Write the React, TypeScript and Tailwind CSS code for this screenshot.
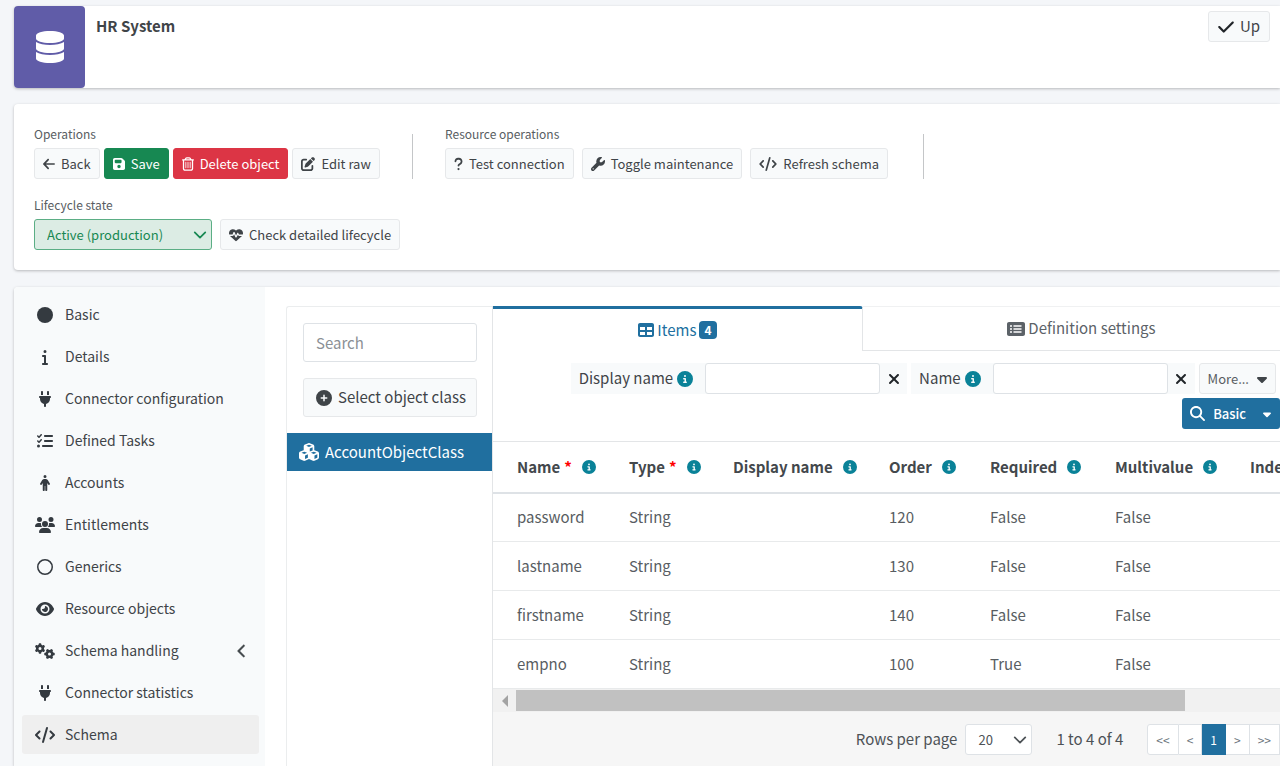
import type { ButtonHTMLAttributes, ReactNode } from "react";
import type { IconType } from "react-icons";
import { FaDatabase } from "react-icons/fa";
import {
  FaArrowLeft,
  FaCaretDown,
  FaCheck,
  FaChevronLeft,
  FaCircle,
  FaCircleInfo,
  FaCirclePlus,
  FaCode,
  FaCubes,
  FaEye,
  FaFloppyDisk,
  FaGears,
  FaHeartPulse,
  FaInfo,
  FaListCheck,
  FaMagnifyingGlass,
  FaPenToSquare,
  FaPerson,
  FaPlug,
  FaQuestion,
  FaRectangleList,
  FaRegCircle,
  FaRegTrashCan,
  FaTable,
  FaUsers,
  FaWrench,
  FaXmark,
} from "react-icons/fa6";

const menu: { label: string; icon: IconType; expandable?: boolean; active?: boolean }[] = [
  { label: "Basic", icon: FaCircle },
  { label: "Details", icon: FaInfo },
  { label: "Connector configuration", icon: FaPlug },
  { label: "Defined Tasks", icon: FaListCheck },
  { label: "Accounts", icon: FaPerson },
  { label: "Entitlements", icon: FaUsers },
  { label: "Generics", icon: FaRegCircle },
  { label: "Resource objects", icon: FaEye },
  { label: "Schema handling", icon: FaGears, expandable: true },
  { label: "Connector statistics", icon: FaPlug },
  { label: "Schema", icon: FaCode, active: true },
];

const columns = [
  { label: "Name", required: true, width: "w-[112px]" },
  { label: "Type", required: true, width: "w-[104px]" },
  { label: "Display name", width: "w-[156px]" },
  { label: "Order", width: "w-[101px]" },
  { label: "Required", width: "w-[125px]" },
  { label: "Multivalue", width: "w-[135px]" },
  { label: "Indexed", width: "w-[140px]" },
];

const rows = [
  ["password", "String", "", "120", "False", "False", ""],
  ["lastname", "String", "", "130", "False", "False", ""],
  ["firstname", "String", "", "140", "False", "False", ""],
  ["empno", "String", "", "100", "True", "False", ""],
];

type ToolButtonProps = {
  icon: IconType;
  iconWidth?: string;
  tone?: "light" | "green" | "red";
  children: ReactNode;
} & ButtonHTMLAttributes<HTMLButtonElement>;

function ToolButton({ icon: Icon, iconWidth = "w-[14px]", tone = "light", children, ...rest }: ToolButtonProps) {
  const tones = {
    light: "border-[#e6e8ea] bg-[#f8fafb] text-[#3f4448]",
    green: "border-[#178852] bg-[#178852] text-white",
    red: "border-[#dc3545] bg-[#dc3545] text-white",
  };
  return (
    <button
      type="button"
      className={`flex h-[31px] items-center gap-[6px] whitespace-nowrap rounded-[3px] border px-2 text-[13px] ${tones[tone]}`}
      {...rest}
    >
      <Icon className={`h-[14px] shrink-0 ${iconWidth}`} />
      {children}
    </button>
  );
}

function Filter({ label, id }: { label: string; id: string }) {
  return (
    <div className="flex h-[31px] items-stretch bg-[#f8fafb]">
      <label htmlFor={id} className="flex items-center gap-1 whitespace-nowrap pl-2 pr-3">
        {label}
        <FaCircleInfo className="size-4 text-[#0a8298]" />
      </label>
      <input
        id={id}
        type="text"
        className="w-[175px] rounded-[3px] border border-[#dee2e6] bg-white px-2 outline-none"
      />
      <button type="button" aria-label={`Remove ${label}`} className="flex w-[27px] items-center justify-center text-[#212529]">
        <FaXmark className="size-4" />
      </button>
    </div>
  );
}

function Chevron({ className }: { className?: string }) {
  return (
    <svg viewBox="0 0 16 16" fill="none" stroke="currentColor" strokeWidth="2" strokeLinecap="round" strokeLinejoin="round" className={className}>
      <path d="m2 5 6 6 6-6" />
    </svg>
  );
}

function Toolbar() {
  return (
    <section className="ml-[14px] mt-4 rounded-l-[4px] bg-white pb-5 pl-5 pt-[22px] shadow-[0_1px_3px_rgba(0,0,0,0.25)]">
      <div className="flex">
        <div className="w-[359px]">
          <h2 className="mb-[6px] text-[12px] leading-4 text-[#585d62]">Operations</h2>
          <div className="flex gap-1">
            <ToolButton icon={FaArrowLeft} iconWidth="w-3">Back</ToolButton>
            <ToolButton icon={FaFloppyDisk} iconWidth="w-3" tone="green">Save</ToolButton>
            <ToolButton icon={FaRegTrashCan} iconWidth="w-3" tone="red">Delete object</ToolButton>
            <ToolButton icon={FaPenToSquare}>Edit raw</ToolButton>
          </div>
        </div>
        <div className="mr-8 mt-2 w-5 border-r border-[#c4c6c8]" />
        <div className="w-[459px]">
          <h2 className="mb-[6px] text-[12px] leading-4 text-[#585d62]">Resource operations</h2>
          <div className="flex gap-2">
            <ToolButton icon={FaQuestion} iconWidth="w-[9px]">Test connection</ToolButton>
            <ToolButton icon={FaWrench}>Toggle maintenance</ToolButton>
            <ToolButton icon={FaCode} iconWidth="w-[18px]">Refresh schema</ToolButton>
          </div>
        </div>
        <div className="mt-2 w-5 border-r border-[#c4c6c8]" />
      </div>
      <label htmlFor="lifecycle" className="mb-[6px] mt-[18px] block text-[12px] leading-4 text-[#585d62]">
        Lifecycle state
      </label>
      <div className="flex gap-2">
        <div className="relative">
          <select
            id="lifecycle"
            className="h-[31px] w-[178px] appearance-none rounded-[3px] border border-[#5bae85] bg-[#dcece4] pl-3 text-[13px] text-[#178852]"
          >
            <option>Active (production)</option>
          </select>
          <Chevron className="pointer-events-none absolute right-[5px] top-[9px] size-[14px] text-[#178852]" />
        </div>
        <ToolButton icon={FaHeartPulse}>Check detailed lifecycle</ToolButton>
      </div>
    </section>
  );
}

function SideMenu() {
  return (
    <nav className="w-[251px] shrink-0 rounded-tl-[4px] bg-[#f8fafb] pl-2 pr-[6px] pt-2">
      <ul className="flex flex-col gap-[3px]">
        {menu.map(({ label, icon: Icon, expandable, active }) => (
          <li key={label}>
            <a
              href="#"
              className={`flex h-[39px] items-center gap-[9px] rounded-[3px] px-3 text-[14px] text-[#3f4448] ${active ? "bg-[#efefef]" : ""}`}
            >
              <span className="flex w-[22px] justify-center text-[#343a40]">
                <Icon className="h-4 w-5 shrink-0" />
              </span>
              {label}
              {expandable && <FaChevronLeft className="ml-auto h-[14px] w-[10px] stroke-current" strokeWidth={16} />}
            </a>
          </li>
        ))}
      </ul>
    </nav>
  );
}

function ObjectClasses() {
  return (
    <div className="w-[206px] shrink-0 rounded-tl-[3px] border-l border-t border-[#ebedee]">
      <div className="flex flex-col gap-4 p-4 pr-[15px]">
        <input
          type="search"
          aria-label="Search"
          placeholder="Search"
          className="h-[39px] w-full rounded-[3px] border border-[#dee2e6] px-3 text-[15px] outline-none placeholder:text-[#8b9095]"
        />
        <button
          type="button"
          className="flex h-[39px] items-center gap-[6px] whitespace-nowrap rounded-[3px] border border-[#e6e8ea] bg-[#f8fafb] px-3 text-[15px] text-[#3f4448]"
        >
          <FaCirclePlus className="size-4 shrink-0" />
          Select object class
        </button>
      </div>
      <a href="#" className="flex h-[38px] items-center gap-[6px] bg-[#206f9f] px-3 text-[15px] text-white">
        <FaCubes className="h-[18px] w-5 shrink-0" />
        AccountObjectClass
      </a>
    </div>
  );
}

function Pagination() {
  const pages = ["<<", "<", "1", ">", ">>"];
  return (
    <div className="flex h-[31px] text-[12px]">
      {pages.map((page) => (
        <button
          key={page}
          type="button"
          className={`border-y border-r px-2 first:rounded-l-[3px] first:border-l ${
            page === "1" ? "border-[#206f9f] bg-[#206f9f] text-white" : "border-[#dee2e6] bg-white text-[#6c757d]"
          }`}
        >
          {page}
        </button>
      ))}
    </div>
  );
}

function ItemsPanel() {
  return (
    <div className="flex min-w-0 flex-1 flex-col border-l border-[#e3e5e7]">
      <div role="tablist" className="flex h-[45px] text-[15px]">
        <button
          role="tab"
          aria-selected="true"
          type="button"
          className="flex w-[47%] items-center justify-center gap-[3px] rounded-tr-[3px] border-r border-t-3 border-r-[#e3e5e7] border-t-[#206f9f] text-[#206f9f]"
        >
          <FaTable className="size-4" />
          Items
          <span className="rounded-[4px] bg-[#206f9f] px-[5px] text-[12px] font-bold leading-[18px] text-white">4</span>
        </button>
        <button
          role="tab"
          aria-selected="false"
          type="button"
          className="flex flex-1 items-center justify-center gap-[3px] border-b border-t border-b-[#e3e5e7] border-t-[#f0f1f2] pl-5 text-[#5c6268]"
        >
          <FaRectangleList className="h-4 w-[18px]" />
          Definition settings
        </button>
      </div>
      <div className="flex flex-wrap justify-end gap-y-1 pb-3 pt-3 text-[15px]">
        <div className="flex gap-1 pr-1">
          <Filter label="Display name" id="filter-display-name" />
          <Filter label="Name" id="filter-name" />
          <button
            type="button"
            className="flex h-[31px] items-center gap-2 rounded-[3px] border border-[#e6e8ea] bg-[#f8fafb] px-2 text-[13px] text-[#585d62]"
          >
            More...
            <FaCaretDown className="h-4 w-[10px] text-[#3f4448]" />
          </button>
        </div>
        <div className="flex h-[31px] overflow-hidden rounded-[3px] bg-[#206f9f] text-[13px] font-medium text-white">
          <button type="button" className="flex items-center gap-2 px-2">
            <FaMagnifyingGlass className="size-[15px]" />
            Basic
          </button>
          <button type="button" aria-label="Search mode" className="px-[9px]">
            <FaCaretDown className="h-[14px] w-2" />
          </button>
        </div>
      </div>
      <div className="overflow-hidden">
        <table className="w-[873px] table-fixed border-t border-[#e3e5e7] text-left text-[15px] leading-6">
          <thead>
            <tr className="h-[51px] border-b-2 border-[#dee2e6] text-[#43484c]">
              {columns.map((column) => (
                <th key={column.label} className={`${column.width} whitespace-nowrap pl-6 font-bold`}>
                  <span className="flex items-center">
                    {column.label}
                    {column.required && <span className="ml-1 text-[#ff0000]">*</span>}
                    <FaCircleInfo className="ml-[10px] size-[14px] text-[#0a8298]" />
                  </span>
                </th>
              ))}
            </tr>
          </thead>
          <tbody className="text-[#585d62]">
            {rows.map((row) => (
              <tr key={row[0]} className="h-[49px] border-b border-[#e8eaeb]">
                {row.map((cell, i) => (
                  <td key={columns[i].label} className="pl-6">{cell}</td>
                ))}
              </tr>
            ))}
          </tbody>
        </table>
      </div>
      <div className="flex h-[23px] items-center bg-[#f1f1f1]">
        <div className="flex w-[23px] shrink-0 items-center justify-center">
          <svg viewBox="0 0 6 12" className="h-3 w-[6px] fill-[#a3a3a3]">
            <path d="M6 0v12L0 6z" />
          </svg>
        </div>
        <div className="flex-1">
          <div className="h-[21px] w-7/8 bg-[#c1c1c1]" />
        </div>
      </div>
      <div className="flex flex-1 items-start justify-end bg-[#f6f6f6] pt-3 text-[15px] text-[#4d5256]">
        <div className="flex h-[31px] items-center">
          <label htmlFor="page-size" className="mr-2">Rows per page</label>
          <div className="relative mr-6">
            <select
              id="page-size"
              className="h-[31px] w-[67px] appearance-none rounded-[3px] border border-[#dee2e6] bg-white pl-3 text-[13px]"
            >
              <option>20</option>
            </select>
            <Chevron className="pointer-events-none absolute right-[5px] top-[9px] size-[14px]" />
          </div>
          <span className="mr-6">1 to 4 of 4</span>
          <Pagination />
        </div>
      </div>
    </div>
  );
}

export default function App() {
  return (
    <div className="flex min-h-screen flex-col overflow-hidden bg-[#f4f6f9] pt-[6px] font-['Noto_Sans_CJK_SC',sans-serif] text-[#3f4448]">
      <header className="ml-[14px] flex items-start rounded-l-[4px] bg-white shadow-[0_1px_3px_rgba(0,0,0,0.25)]">
        <div className="flex h-[82px] w-[71px] items-center justify-center rounded-[4px] bg-[#605ca8] text-white">
          <FaDatabase className="size-8" />
        </div>
        <h1 className="ml-[11px] mt-2 text-[15px] font-bold leading-6">HR System</h1>
        <div className="ml-auto mr-[10px] mt-[5px] flex h-[31px] items-center gap-[6px] rounded-[3px] border border-[#e6e8ea] bg-[#f8fafb] px-[9px] text-[15px]">
          <FaCheck className="h-[18px] w-4 text-[#212529]" />
          Up
        </div>
      </header>
      <Toolbar />
      <main className="ml-[14px] mt-[17px] flex flex-1 rounded-tl-[4px] bg-white shadow-[0_1px_3px_rgba(0,0,0,0.25)]">
        <SideMenu />
        <div className="ml-[21px] mt-[19px] flex min-w-0 flex-1">
          <ObjectClasses />
          <ItemsPanel />
        </div>
      </main>
    </div>
  );
}
